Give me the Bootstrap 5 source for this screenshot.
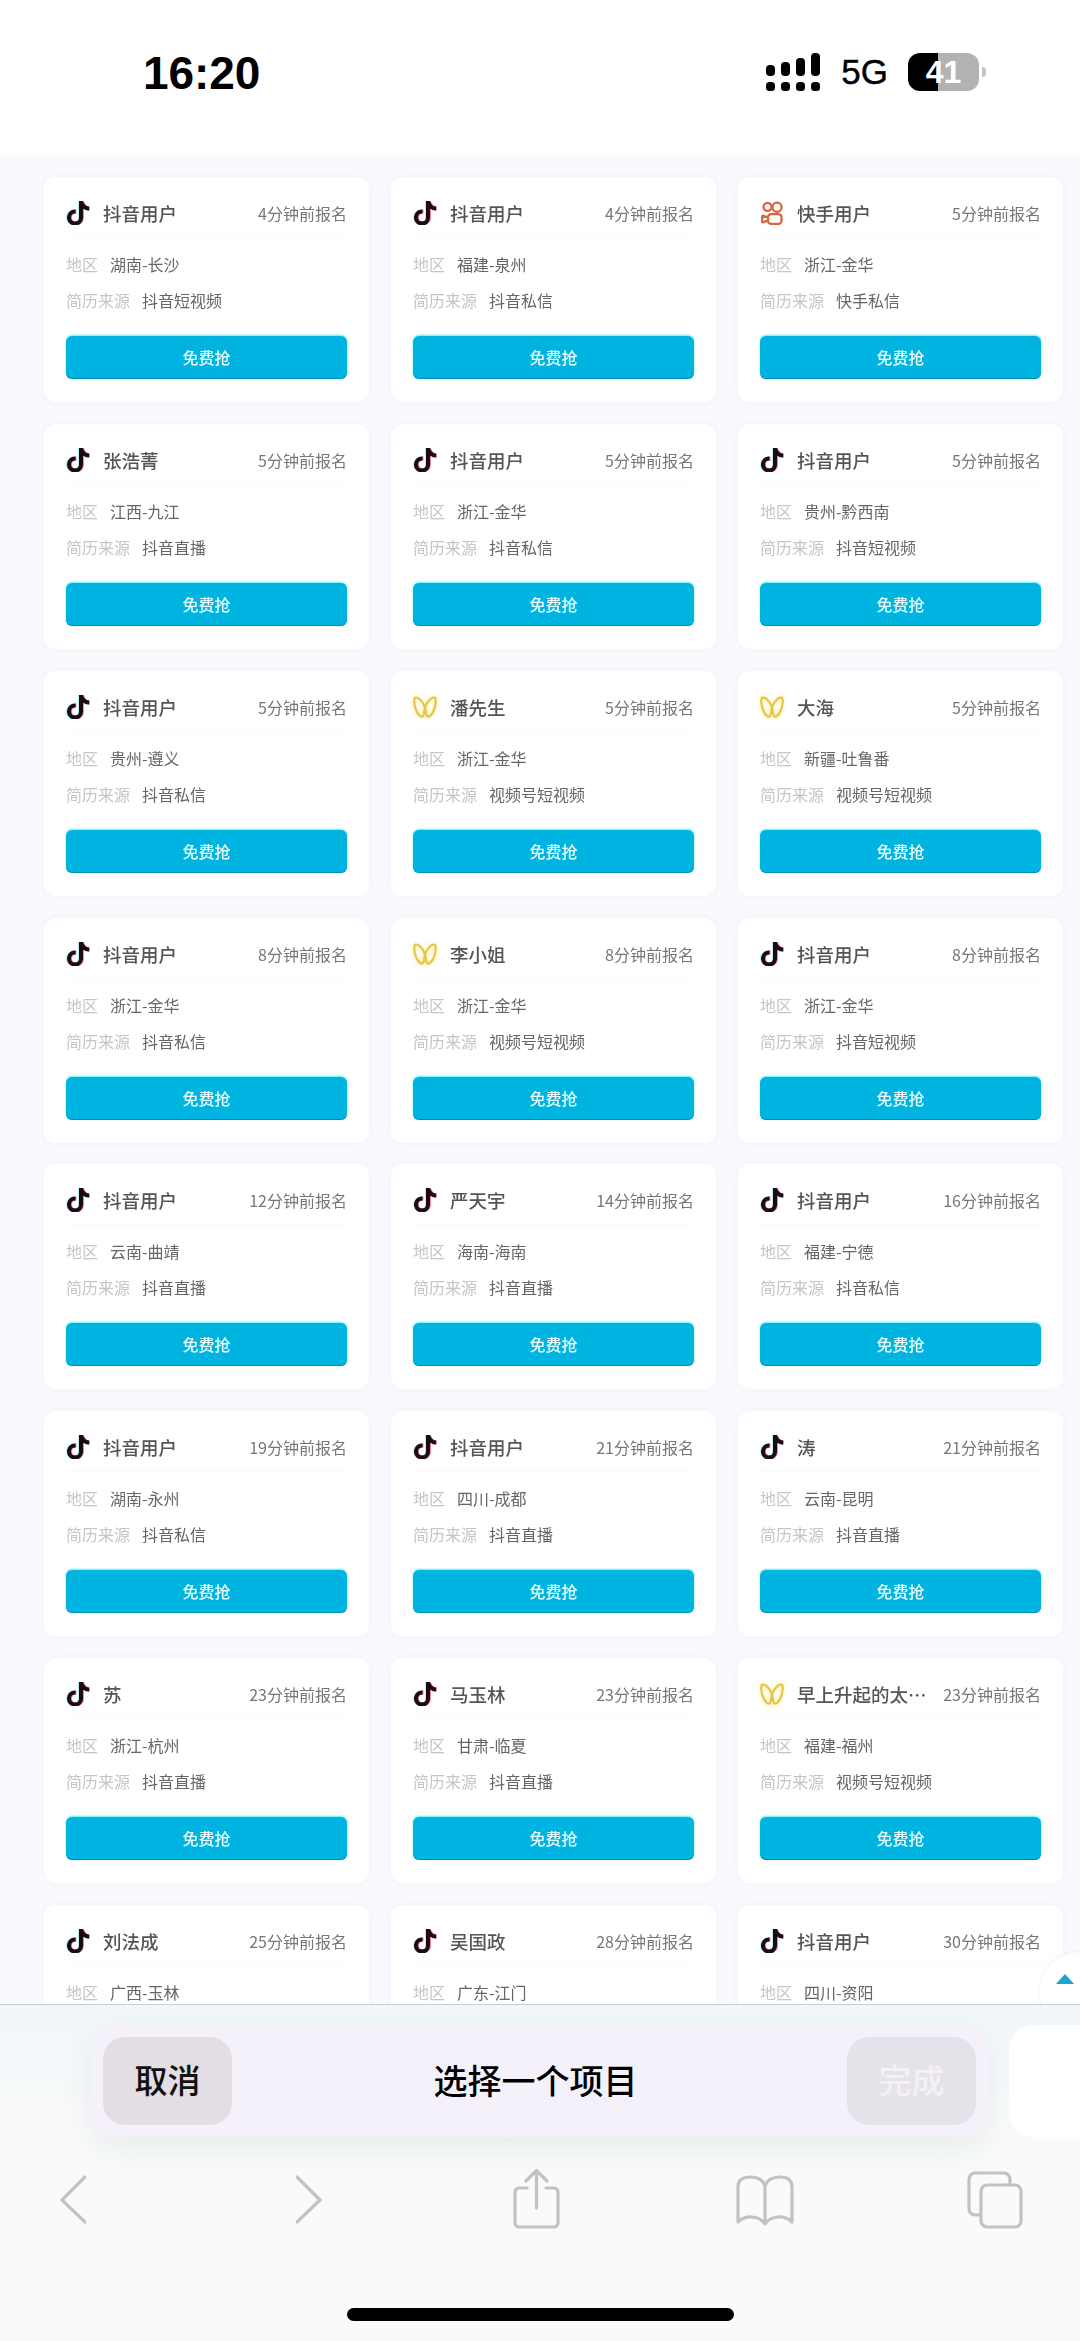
<!DOCTYPE html>
<html lang="zh-CN">
<head>
  <meta charset="UTF-8" />
  <title>简历列表</title>
  <link href="https://cdn.jsdelivr.net/npm/bootstrap@5.3.3/dist/css/bootstrap.min.css" rel="stylesheet">
  <style>
    html, body { height: 2341px; overflow: hidden; }
    body { background: #fff; font-family: "Noto Sans CJK SC", "Noto Sans", sans-serif; }
    .phone { height: 2341px; }

    .status-row { height: 155px; background: #fff; padding: 53px 94px 0 143px; }
    .clock { font: 700 46px/40px "Liberation Sans", sans-serif; color: #000; letter-spacing: -.1px; }
    .net-type { font: 400 35px/38px "Liberation Sans", sans-serif; color: #000; margin: 0 20px 0 21px; -webkit-text-stroke: .4px #000; }
    .batt { width: 71px; height: 38px; border-radius: 12px; color: #fff; font: 700 32px/38px "Liberation Sans", sans-serif;
      background: linear-gradient(90deg, #000 0 30px, #b3b3b3 30px 100%); }
    .batt-nub { width: 4px; height: 10px; margin-left: 3px; border-radius: 0 4px 4px 0; background: #c4c4c4; }

    .lead-list { flex: 1 1 0; background: #f9f9fe; padding: 22px 17px 0 44px; overflow: hidden; min-height: 0; }
    .lead-grid { display: grid; grid-template-columns: repeat(3, 1fr); gap: 21.85px 22px; }
    .lead-card { height: 225px; padding: 0 22px; border: 0; border-radius: 12px; background: #fff; box-shadow: 0 0 6px rgba(235,235,250,.5); filter: blur(.3px); }
    .lead-head { height: 61px; margin-bottom: 8px; padding-top: 12px; border-bottom: 1px solid #fafafa; }
    .lead-name { margin-left: 13px; font-size: 18.5px; line-height: 48px; font-weight: 500; color: #555; white-space: nowrap; max-width: 136px; }
    .lead-time { font-size: 16px; line-height: 48px; color: #777; white-space: nowrap; }
    .ic-box { width: 24px; height: 24px; flex: none; }
    .ic-tiktok { filter: drop-shadow(1px 0 0 rgba(230,40,90,.55)) drop-shadow(-.6px 0 0 rgba(40,210,225,.3)); }
    .ic-wx { filter: drop-shadow(0 0 2px rgba(250,225,110,.8)); }
    .info-row { height: 36px; line-height: 36px; font-size: 16px; color: #666; }
    .info-key { color: #c6c6c6; margin-right: 12px; }
    .grab-btn { height: 43px; width: 100%; margin-top: 18px; padding: 0; border: 0; border-radius: 6px; background: #00b4e1; color: #e8fdff; font-size: 16px; font-weight: 500; line-height: 43px;
      box-shadow: 0 -1px 2px rgba(70,240,245,.9), inset 0 -1px 0 rgba(0,120,150,.6); }
    .to-top { top: 1797px; right: -40px; width: 80px; height: 80px; padding: 22px 0 0 16px; border-radius: 50%; background: #fff; box-shadow: 0 0 4px rgba(220,220,235,.6); }
    .to-top-arrow { width: 0; height: 0; border-left: 9px solid transparent; border-right: 9px solid transparent; border-bottom: 10px solid #1aa6d2; }

    .sheet { height: 337px; flex: none; border-top: 1px solid #c9cdcf; background: linear-gradient(180deg, #f1f6f9 0, #f8fafb 110px, #fafafa 230px); }
    .pick-row { margin-top: 20px; }
    .pick-bar { width: 897px; height: 112px; margin-left: 91px; padding: 12px; border-radius: 26px; background: #f5f1fa; box-shadow: 0 10px 30px rgba(120,130,140,.13); }
    .pick-btn { width: 129px; height: 88px; padding: 0 0 4px; border: 0; border-radius: 22px; background: #e2dee3; font-size: 33px; font-weight: 500; line-height: 84px; color: #111; }
    .pick-btn.is-off { background: #e6e2ea; color: #f3f1f6; }
    .pick-title { margin: 0 8px 4px 0; font-size: 34px; font-weight: 500; color: #000; }
    .pick-next { width: 71px; height: 112px; margin-left: 21px; border-radius: 26px 0 0 26px; background: #fff; }
    .tool-row { margin-top: 32px; padding-left: 60px; }
    .tool-row svg { display: block; height: 60px; fill: none; stroke: #c2c2c4; stroke-width: 3.2; stroke-linecap: round; stroke-linejoin: round; }
    .tool-row svg:nth-child(2) { margin-left: 210px; }
    .tool-row svg:nth-child(3) { margin-left: 191px; }
    .tool-row svg:nth-child(4) { margin-left: 175px; }
    .tool-row svg:nth-child(5) { margin-left: 172px; }
    .home-bar { width: 387px; height: 13px; margin: 79px auto 0; border-radius: 7px; background: #000; }
  </style>
</head>
<body>
  <svg width="0" height="0" class="d-block">
    <defs>
      <symbol id="tiktok" viewBox="0 0 16 16">
        <path fill="#1b0b14" stroke="#1b0b14" stroke-width=".7" d="M9 0h1.98c.144.715.54 1.617 1.235 2.512C12.895 3.389 13.797 4 15 4v2c-1.753 0-3.07-.814-4-1.829V11a5 5 0 1 1-5-5v2a3 3 0 1 0 3 3V0Z"/>
      </symbol>
      <symbol id="kuaishou" viewBox="0 0 24 24">
        <g fill="none" stroke="#d9653f" stroke-width="2.3" stroke-linejoin="round">
          <circle cx="7.5" cy="5.8" r="4"/>
          <circle cx="17" cy="6.3" r="4.6"/>
          <rect x="8" y="13.2" width="13.5" height="9.6" rx="3"/>
          <path d="M8 16.5 3 14.6Q2.2 14.4 2.2 15.4V20.6Q2.2 21.6 3 21.4L8 19.5"/>
        </g>
      </symbol>
      <symbol id="wxvideo" viewBox="0 0 24 24">
        <path fill="none" stroke="#e6c648" stroke-width="2.2" stroke-linejoin="round" d="M12 12C9 5 5 2 2.6 2.6.6 3.2 1 10 3 15c2 5 5 7 6.5 6.500C11 21 11 17 12 12c1 5 1 9 2.500 9.500C16 22 19 20 21 15c2-5 2.400-11.800.400-12.400C19 2 15 5 12 12Z"/>
      </symbol>
    </defs>
  </svg>

  <div class="phone d-flex flex-column">
    <div class="status-row d-flex justify-content-between align-items-start flex-shrink-0">
      <div class="clock">16:20</div>
      <div class="d-flex align-items-center">
        <svg width="54" height="38" viewBox="0 0 54 38" fill="#000">
          <rect x="0" y="12" width="9" height="11" rx="4"/><rect x="15" y="9" width="9" height="14" rx="4"/><rect x="30" y="5" width="9" height="18" rx="4"/><rect x="45" y="0" width="9" height="23" rx="4"/>
          <rect x="0" y="29" width="9" height="9" rx="3.500"/><rect x="15" y="29" width="9" height="9" rx="3.500"/><rect x="30" y="29" width="9" height="9" rx="3.500"/><rect x="45" y="29" width="9" height="9" rx="3.500"/>
        </svg>
        <span class="net-type">5G</span>
        <span class="batt d-flex justify-content-center">41</span>
        <span class="batt-nub"></span>
      </div>
    </div>

    <div class="lead-list position-relative">
      <div class="lead-grid" id="leads"></div>
      <div class="to-top position-absolute"><div class="to-top-arrow"></div></div>
    </div>

    <div class="sheet">
      <div class="pick-row d-flex">
        <div class="pick-bar d-flex align-items-center justify-content-between">
          <button class="btn pick-btn" type="button">取消</button>
          <div class="pick-title">选择一个项目</div>
          <button class="btn pick-btn is-off" type="button">完成</button>
        </div>
        <div class="pick-next flex-grow-1"></div>
      </div>
      <div class="tool-row d-flex">
        <svg width="26" viewBox="0 0 26 60"><path d="M25 8 2 31l23 22"/></svg>
        <svg width="26" viewBox="0 0 26 60"><path d="M1 8l23 23L1 53"/></svg>
        <svg width="47" viewBox="0 0 47 60"><path d="M14 19H6a4 4 0 0 0-4 4v31a4 4 0 0 0 4 4h35a4 4 0 0 0 4-4V23a4 4 0 0 0-4-4h-8"/><path d="M23.500 39V2M13 12 23.500 1.500 34 12"/></svg>
        <svg width="60" viewBox="0 0 60 60"><path d="M30 17C28 11 23 8 15 8 7 8 3 11 3 18V53C10 46 24 46 30 55 36 46 50 46 57 53V18C57 11 53 8 45 8 37 8 32 11 30 17ZM30 17V55"/></svg>
        <svg width="56" viewBox="0 0 56 60"><rect x="2" y="4" width="41" height="42" rx="6"/><rect x="14" y="16" width="40" height="42" rx="6" fill="#fafafa"/></svg>
      </div>
      <div class="home-bar"></div>
    </div>
  </div>

  <script>
    // the last row runs under the sheet, only its head and area line show
    const leads = [
      ["tiktok","抖音用户",4,"湖南-长沙","抖音短视频"],["tiktok","抖音用户",4,"福建-泉州","抖音私信"],["kuaishou","快手用户",5,"浙江-金华","快手私信"],
      ["tiktok","张浩菁",5,"江西-九江","抖音直播"],["tiktok","抖音用户",5,"浙江-金华","抖音私信"],["tiktok","抖音用户",5,"贵州-黔西南","抖音短视频"],
      ["tiktok","抖音用户",5,"贵州-遵义","抖音私信"],["wxvideo","潘先生",5,"浙江-金华","视频号短视频"],["wxvideo","大海",5,"新疆-吐鲁番","视频号短视频"],
      ["tiktok","抖音用户",8,"浙江-金华","抖音私信"],["wxvideo","李小姐",8,"浙江-金华","视频号短视频"],["tiktok","抖音用户",8,"浙江-金华","抖音短视频"],
      ["tiktok","抖音用户",12,"云南-曲靖","抖音直播"],["tiktok","严天宇",14,"海南-海南","抖音直播"],["tiktok","抖音用户",16,"福建-宁德","抖音私信"],
      ["tiktok","抖音用户",19,"湖南-永州","抖音私信"],["tiktok","抖音用户",21,"四川-成都","抖音直播"],["tiktok","涛",21,"云南-昆明","抖音直播"],
      ["tiktok","苏",23,"浙江-杭州","抖音直播"],["tiktok","马玉林",23,"甘肃-临夏","抖音直播"],["wxvideo","早上升起的太…",23,"福建-福州","视频号短视频"],
      ["tiktok","刘法成",25,"广西-玉林"],["tiktok","吴国政",28,"广东-江门"],["tiktok","抖音用户",30,"四川-资阳"]
    ];

    const iconClass = { tiktok: "ic-tiktok", kuaishou: "", wxvideo: "ic-wx" };

    document.getElementById("leads").innerHTML = leads.map(([src, name, mins, area, from]) => `
      <div class="card lead-card">
        <div class="lead-head d-flex align-items-center">
          <svg class="ic-box ${iconClass[src]}"><use href="#${src}"/></svg>
          <div class="lead-name">${name}</div>
          <div class="lead-time ms-auto">${mins}分钟前报名</div>
        </div>
        <div class="info-row"><span class="info-key">地区</span>${area}</div>
        ${from ? `<div class="info-row"><span class="info-key">简历来源</span>${from}</div>
        <button class="btn grab-btn" type="button">免费抢</button>` : ""}
      </div>
    `).join("");
  </script>
  <script src="https://cdn.jsdelivr.net/npm/bootstrap@5.3.3/dist/js/bootstrap.bundle.min.js"></script>
</body>
</html>
